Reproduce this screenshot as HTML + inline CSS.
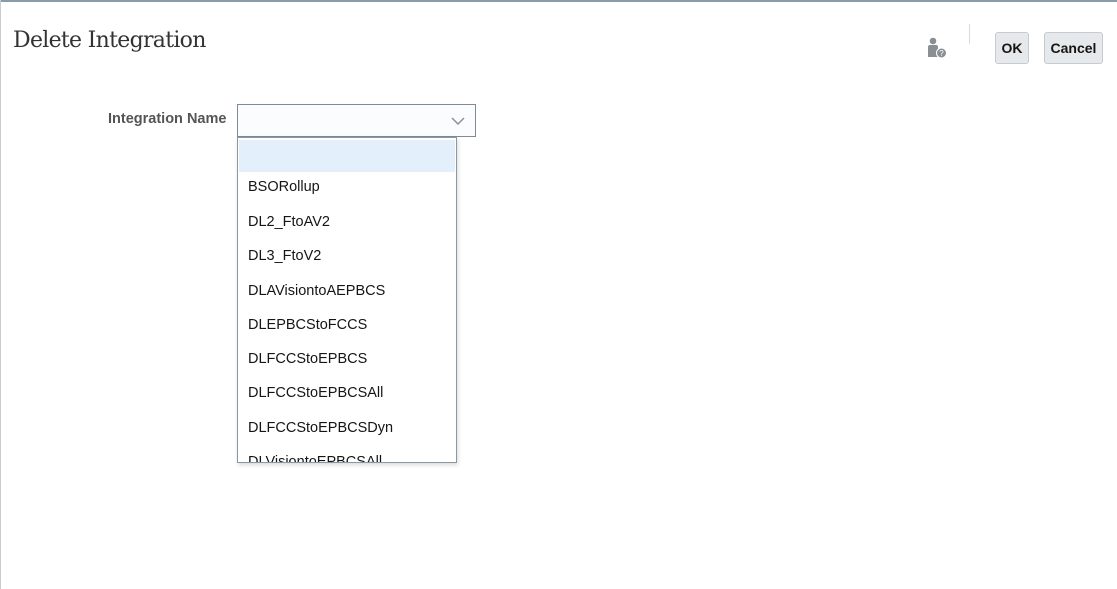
<!DOCTYPE html>
<html><head><style>
body{margin:0;width:1117px;height:589px;background:#fff;position:relative;overflow:hidden;font-family:"Liberation Sans",sans-serif}
.topline{position:absolute;left:0;top:0;width:1117px;height:2px;background:#8a9aa9}
.leftline{position:absolute;left:0;top:0;width:1px;height:589px;background:#c8cdd2}
h1{position:absolute;left:13px;top:28px;margin:0;font:22px "DejaVu Serif","Liberation Serif",serif;color:#333;font-weight:normal;letter-spacing:-0.7px}
.btn{position:absolute;top:32px;height:32px;border:1px solid #c5cbd1;border-radius:3px;background:#e5e9ec;font-weight:bold;font-size:14px;color:#161513;display:flex;align-items:center;justify-content:center;box-sizing:border-box}
.sep{position:absolute;left:969px;top:24px;width:1px;height:20px;background:#d8dcdf}
.label{position:absolute;left:108px;top:111px;font-size:14.5px;font-weight:bold;color:#555}
.sel{position:absolute;left:237px;top:104px;width:239px;height:33px;box-sizing:border-box;border:1px solid #7d8b98;background:#fbfcfd}
.dd{position:absolute;left:237px;top:137px;width:220px;height:326px;box-sizing:border-box;border:1px solid #8a97a4;background:#fff;overflow:hidden;box-shadow:1px 2px 4px rgba(0,0,0,.15)}
.hl{position:absolute;left:1px;top:2px;width:216px;height:32px;background:#e3f0fc}
.it{position:absolute;left:10px;font-size:14.5px;color:#161513}
</style></head><body>
<div class="topline"></div><div class="leftline"></div>
<h1>Delete Integration</h1>
<svg style="position:absolute;left:926px;top:37px" width="22" height="22" viewBox="0 0 22 22">
<circle cx="7" cy="4" r="3.3" fill="#8a8f94"/>
<path d="M2 10 Q2 8 4 8 H10 Q12 8 12 10 V20 H2Z" fill="#8a8f94"/>
<circle cx="15.5" cy="16" r="5" fill="#8a8f94" stroke="#fff" stroke-width="1"/>
<text x="15.5" y="19" font-size="8" fill="#fff" text-anchor="middle" font-family="Liberation Sans">?</text>
</svg>
<div class="sep"></div>
<div class="btn" style="left:995px;width:34px">OK</div>
<div class="btn" style="left:1044px;width:59px">Cancel</div>
<div class="label">Integration Name</div>
<div class="sel"><svg style="position:absolute;left:213px;top:12px" width="14" height="9" viewBox="0 0 14 9"><path d="M1 1 L7 7 L13 1" fill="none" stroke="#8a9096" stroke-width="1.5"/></svg></div>
<div class="dd">
<div class="hl"></div>
<div class="it" style="top:41px">BSORollup</div>
<div class="it" style="top:76px">DL2_FtoAV2</div>
<div class="it" style="top:110px">DL3_FtoV2</div>
<div class="it" style="top:145px">DLAVisiontoAEPBCS</div>
<div class="it" style="top:179px">DLEPBCStoFCCS</div>
<div class="it" style="top:213px">DLFCCStoEPBCS</div>
<div class="it" style="top:247px">DLFCCStoEPBCSAll</div>
<div class="it" style="top:282px">DLFCCStoEPBCSDyn</div>
<div class="it" style="top:316px">DLVisiontoEPBCSAll</div>
</div>
</body></html>
